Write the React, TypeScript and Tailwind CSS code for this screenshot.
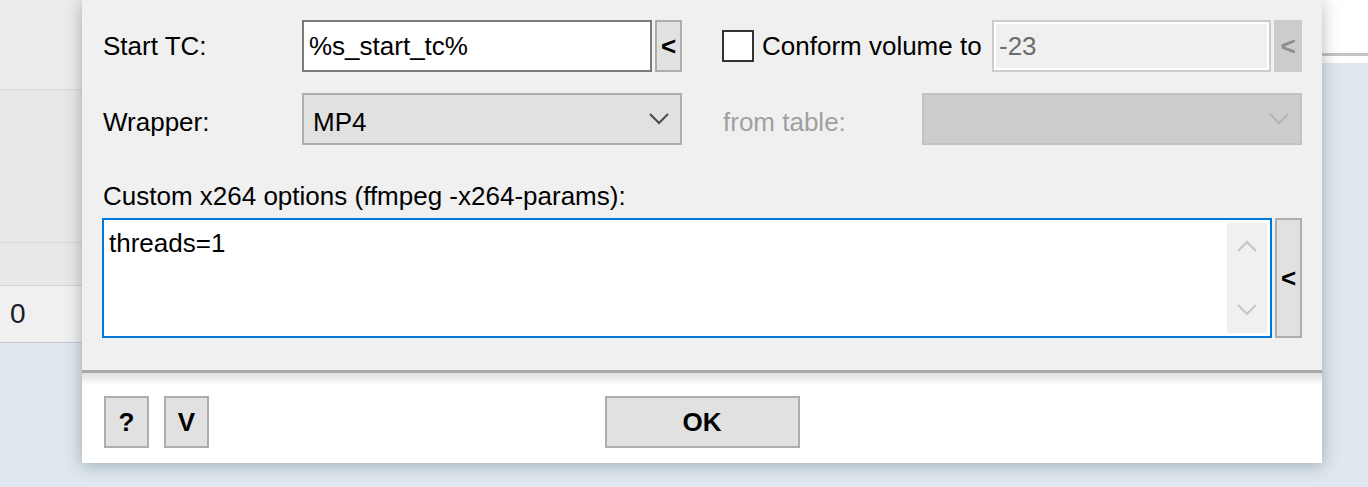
import React from "react";

const font = { fontFamily: '"Liberation Sans", Arial, sans-serif' };

function Chevron({ color, up = false }: { color: string; up?: boolean }) {
  return (
    <svg width="20" height="12" viewBox="0 0 20 12" className="shrink-0">
      <polyline
        points={up ? "1,11 10,2 19,11" : "1,1 10,10 19,1"}
        fill="none"
        stroke={color}
        strokeWidth="2"
      />
    </svg>
  );
}

function SmallBtn({ children, className = "" }: { children: React.ReactNode; className?: string }) {
  return (
    <div
      className={`flex items-center justify-center bg-[#e1e1e1] border-2 border-[#adadad] font-bold text-black text-[26px] leading-[26px] ${className}`}
    >
      {children}
    </div>
  );
}

export default function App() {
  return (
    <div
      className="relative w-[1368px] h-[487px] overflow-hidden bg-[#dfe8ef] text-black text-[26px] leading-[26px]"
      style={font}
    >
      {/* background window on the left */}
      <div className="absolute left-0 top-0 w-[120px] h-[343px] flex flex-col border-b border-[#c4c8cc]">
        <div className="h-[90px] bg-[#ececec] border-b border-[#d8d8d8]" />
        <div className="h-[153px] bg-[#e8e8e8] border-b border-[#d8d8d8]" />
        <div className="h-[43px] bg-[#e8e8e8] border-b border-[#d4d4d4]" />
        <div className="flex-1 bg-[#f0f0f0] flex items-center pl-[10px] text-[28px] text-[#1a1a2a]">0</div>
      </div>

      {/* background window on the right */}
      <div className="absolute left-[1200px] top-0 w-[168px] flex flex-col">
        <div className="h-[53px] bg-white" />
        <div className="h-[3px] bg-[#c3c3c3]" />
        <div className="h-[7px] bg-white" />
      </div>

      {/* dialog */}
      <div className="absolute left-[82px] top-0 w-[1240px] h-[463px] flex flex-col shadow-[0_2px_16px_rgba(30,45,60,0.35)]">
        <div className="h-[370px] bg-[#f0f0f0] pl-[21px] pr-[20px] pt-[20px] flex flex-col">
          {/* row 1 */}
          <div className="flex h-[52px] items-center">
            <div className="w-[199px]">Start TC:</div>
            <div className="w-[350px] h-full bg-white border-2 border-[#7a7a7a] flex items-center pl-[5px]">
              %s_start_tc%
            </div>
            <SmallBtn className="ml-[3px] w-[27px] h-full">&lt;</SmallBtn>
            <div className="ml-[40px] w-[32px] h-[32px] bg-white border-2 border-[#333333]" />
            <div className="ml-[8px] flex-1">Conform volume to</div>
            <div className="w-[279px] h-full bg-[#f0f0f0] border-2 border-[#cccccc] shadow-[inset_0_0_0_2px_#ffffff] flex items-center pl-[5px] text-[#6d6d6d]">
              -23
            </div>
            <div className="ml-[3px] w-[28px] h-full bg-[#cccccc] flex items-center justify-center text-[#8e8e8e] font-bold">
              &lt;
            </div>
          </div>

          {/* row 2 */}
          <div className="flex h-[52px] mt-[21px] items-center">
            <div className="w-[199px] mt-[6px]">Wrapper:</div>
            <div className="w-[380px] h-full bg-[#e1e1e1] border-2 border-[#adadad] flex items-center pl-[9px] pr-[11px]">
              <span className="flex-1 mt-[6px]">MP4</span>
              <Chevron color="#4a4a4a" />
            </div>
            <div className="ml-[41px] flex-1 mt-[6px] text-[#a0a0a0]">from table:</div>
            <div className="w-[380px] h-full bg-[#cccccc] border-2 border-[#c2c2c2] flex items-center justify-end pr-[11px]">
              <Chevron color="#b4b4b4" />
            </div>
          </div>

          {/* row 3 label */}
          <div className="mt-[38px] h-[26px]">Custom x264 options (ffmpeg -x264-params):</div>

          {/* row 4 */}
          <div className="mt-[9px] h-[120px] flex ml-[-1px]">
            <div className="w-[1170px] h-full bg-white border-2 border-[#0078d7] flex pl-[5px] pt-[10px] pr-[3px] pb-[3px]">
              <div className="flex-1">threads=1</div>
              <div className="w-[40px] mt-[-7px] bg-[#f0f0f0] flex flex-col items-center justify-between py-[17px]">
                <Chevron color="#c6c6c6" up />
                <Chevron color="#c6c6c6" />
              </div>
            </div>
            <SmallBtn className="ml-[3px] w-[27px] h-full">&lt;</SmallBtn>
          </div>
        </div>

        <div className="h-[3px] bg-[#a8a8a8]" />

        <div className="flex-1 bg-[linear-gradient(to_bottom,#dedede,#ffffff_12px)] grid grid-cols-[1fr_auto_1fr] items-start pt-[23px]">
          <div className="flex gap-[15px] pl-[22px]">
            <SmallBtn className="w-[45px] h-[52px]">?</SmallBtn>
            <SmallBtn className="w-[45px] h-[52px]">V</SmallBtn>
          </div>
          <SmallBtn className="w-[195px] h-[52px]">OK</SmallBtn>
          <div />
        </div>
      </div>
    </div>
  );
}
